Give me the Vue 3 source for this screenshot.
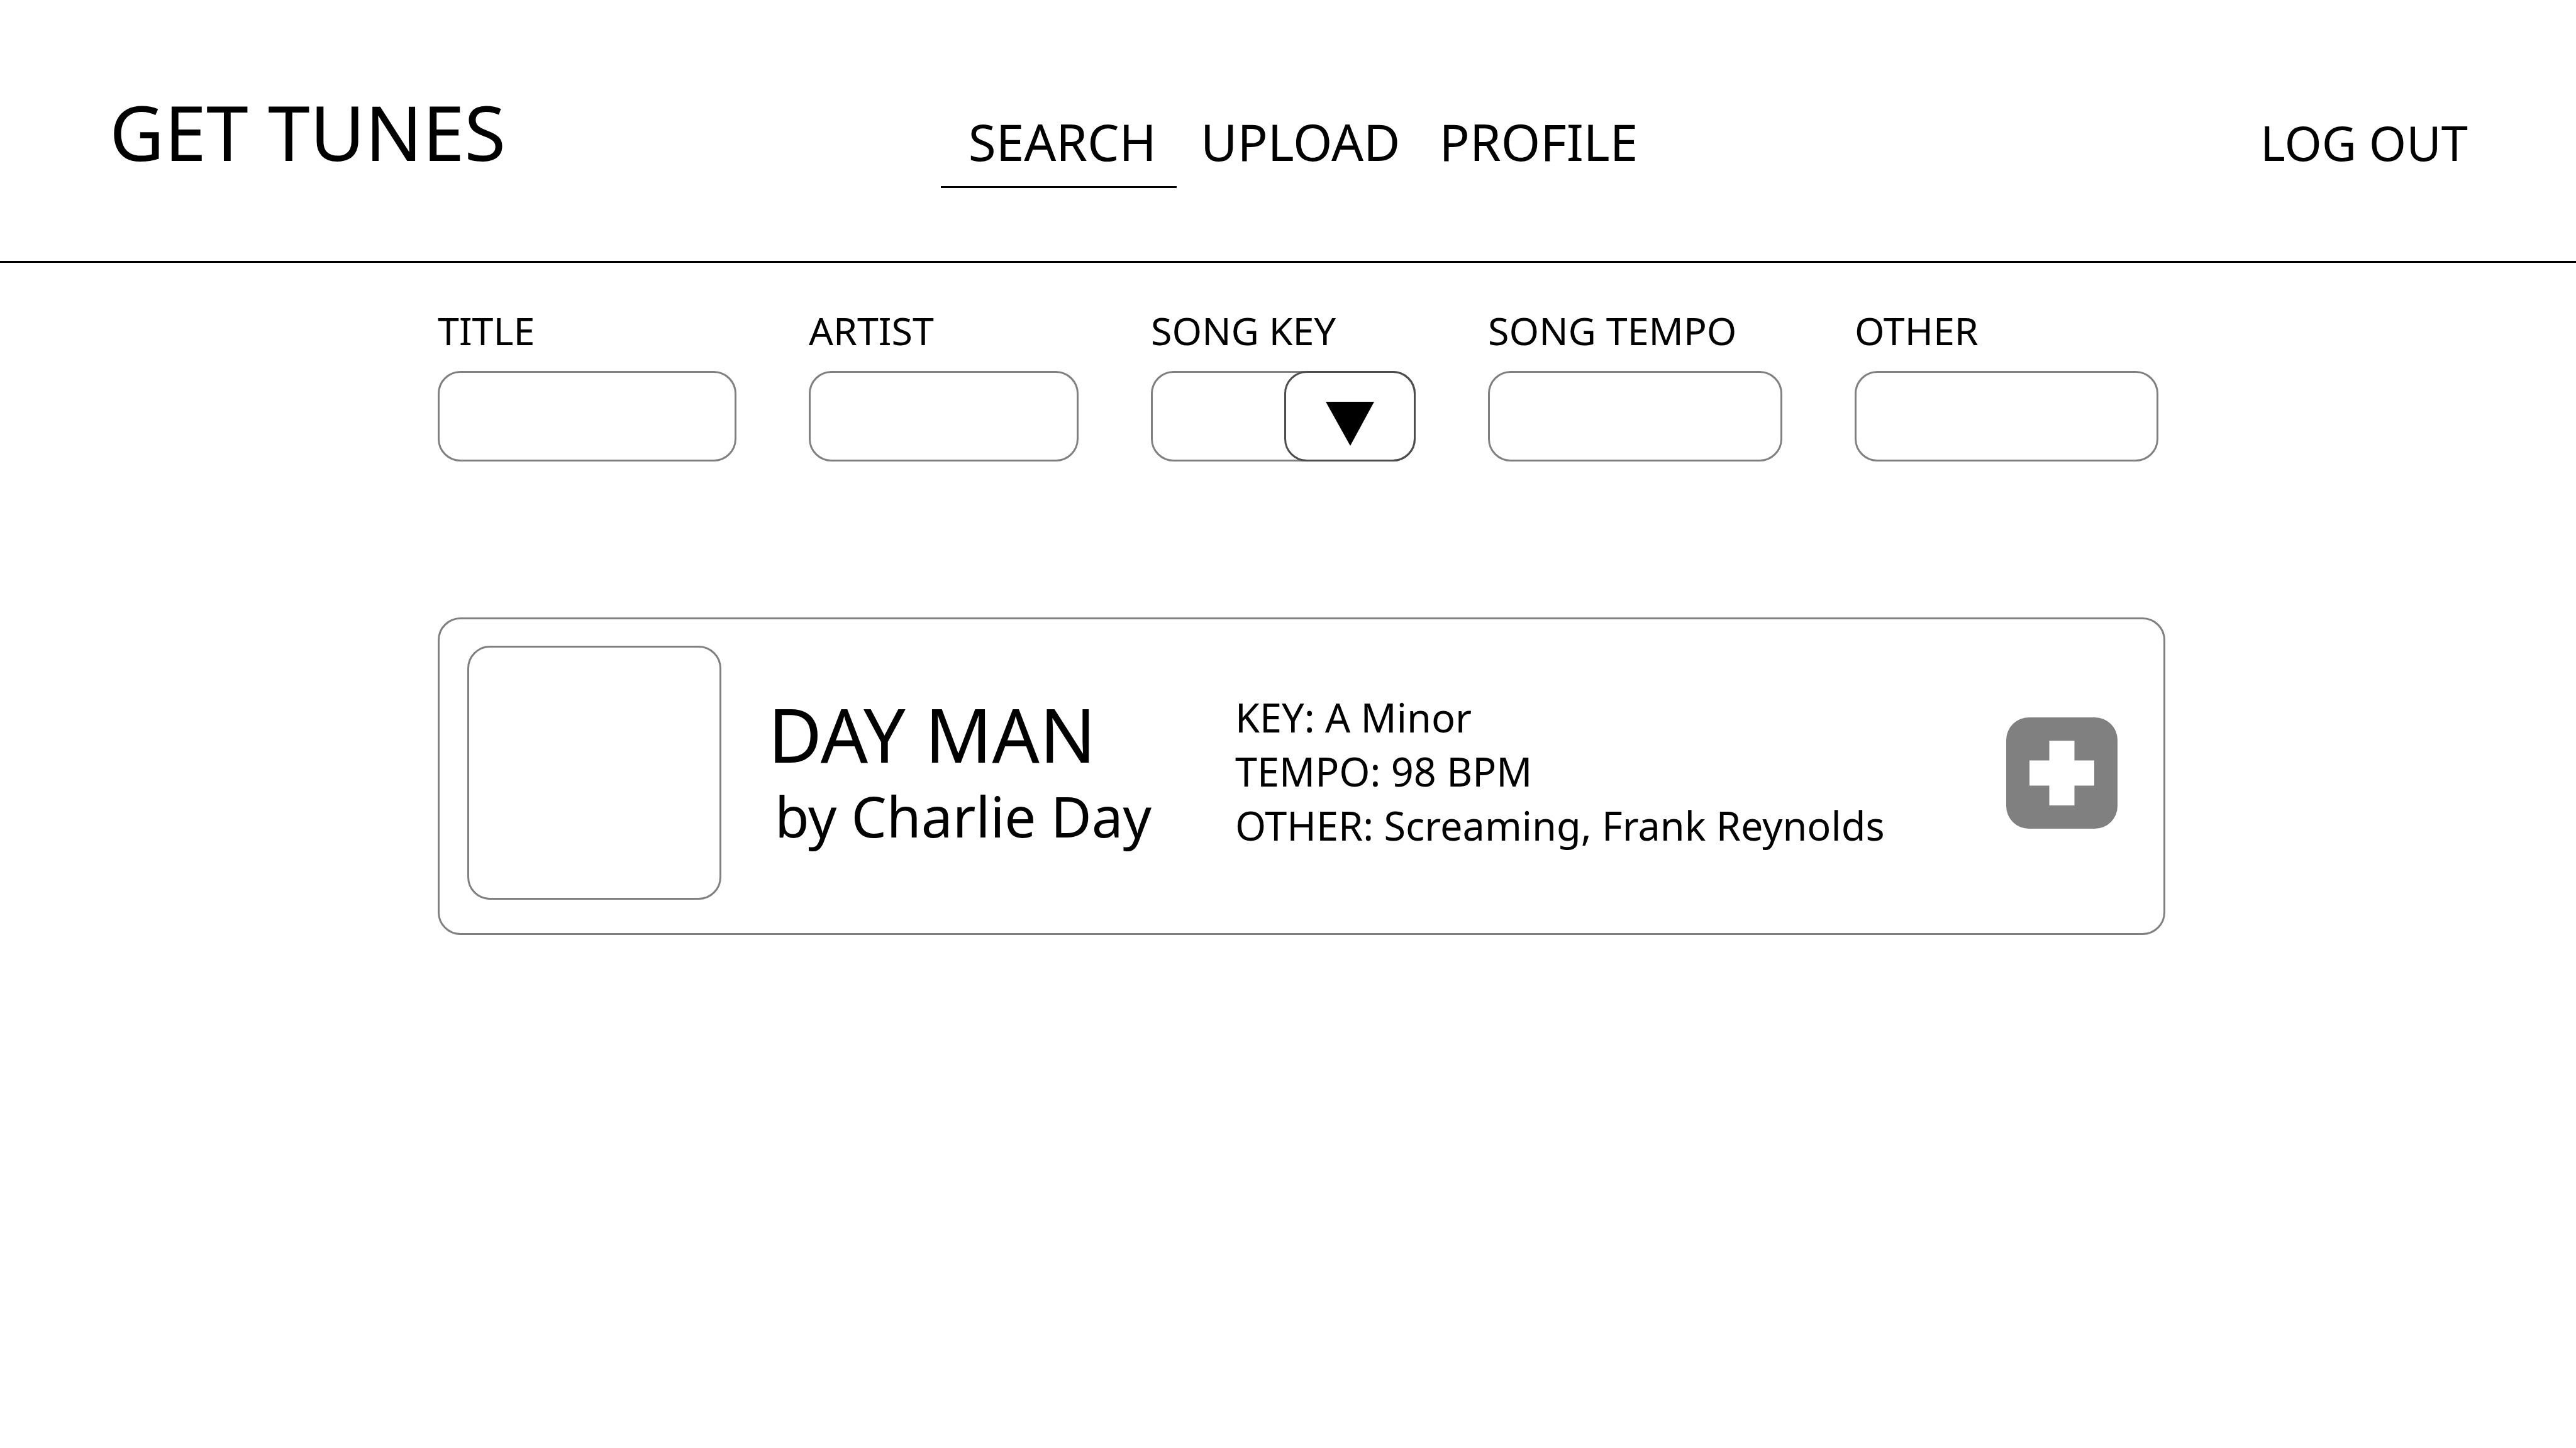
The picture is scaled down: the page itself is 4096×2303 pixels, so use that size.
<script setup>
import { ref } from 'vue'

const links = [
  { label: 'SEARCH', href: '#search', active: true },
  { label: 'UPLOAD', href: '#upload', active: false },
  { label: 'PROFILE', href: '#profile', active: false },
]

const filters = ref([
  { id: 'title', label: 'TITLE', type: 'text', value: '' },
  { id: 'artist', label: 'ARTIST', type: 'text', value: '' },
  { id: 'song-key', label: 'SONG KEY', type: 'select', value: '' },
  { id: 'song-tempo', label: 'SONG TEMPO', type: 'text', value: '' },
  { id: 'other', label: 'OTHER', type: 'text', value: '' },
])

const songs = [
  {
    title: 'DAY MAN',
    artist: 'by Charlie Day',
    details: ['KEY: A Minor', 'TEMPO: 98 BPM', 'OTHER: Screaming, Frank Reynolds'],
  },
]
</script>

<template>
  <div class="page">
    <header class="header">
      <h1 class="logo">GET TUNES</h1>
      <nav class="nav">
        <a
          v-for="link in links"
          :key="link.label"
          :href="link.href"
          class="nav-link"
          :class="{ active: link.active }"
        >{{ link.label }}</a>
      </nav>
      <a href="#logout" class="logout">LOG OUT</a>
    </header>

    <main class="main">
      <form class="filters" @submit.prevent>
        <div v-for="f in filters" :key="f.id" class="field">
          <label :for="f.id">{{ f.label }}</label>
          <div v-if="f.type === 'select'" class="select-wrap">
            <select :id="f.id" v-model="f.value" class="control">
              <option value=""></option>
            </select>
            <span class="arrow" aria-hidden="true">
              <svg width="77" height="70" viewBox="0 0 77 70">
                <path d="M0 0H77L39 70Z" fill="#000" />
              </svg>
            </span>
          </div>
          <input v-else :id="f.id" v-model="f.value" type="text" class="control" />
        </div>
      </form>

      <article v-for="song in songs" :key="song.title" class="card">
        <div class="cover"></div>
        <div class="song">
          <h2>{{ song.title }}</h2>
          <p>{{ song.artist }}</p>
        </div>
        <ul class="details">
          <li v-for="d in song.details" :key="d">{{ d }}</li>
        </ul>
        <button type="button" class="add" aria-label="Add song">
          <svg width="103" height="103" viewBox="0 0 103 103" aria-hidden="true">
            <path d="M31.500 0H71.500V31.500H103V71.500H71.500V103H31.500V71.500H0V31.500H31.500Z" fill="#fff" />
          </svg>
        </button>
      </article>
    </main>
  </div>
</template>

<style>
body {
  margin: 0;
  background: #fff;
}
</style>

<style scoped>
.page {
  color: #000;
  font-family: "Noto Sans", "Open Sans", sans-serif;
}

h1,
h2,
p,
ul {
  margin: 0;
  padding: 0;
  font-weight: 400;
}

a {
  color: inherit;
  text-decoration: none;
}

.header {
  display: grid;
  grid-template-columns: 1fr auto 1fr;
  align-items: baseline;
  padding: 150px 172px 116px;
  border-bottom: 3px solid #000;
}

.logo {
  padding-left: 2px;
  font-size: 120px;
  line-height: 120px;
}

.nav {
  display: flex;
  gap: 14px;
  margin-right: -28px;
  font-size: 80px;
  line-height: 80px;
}

.nav-link {
  padding: 0 24px 31px;
  border-bottom: 3px solid transparent;
}

.nav-link.active {
  padding: 0 32px 31px 44px;
  border-bottom-color: #000;
}

.logout {
  justify-self: end;
  font-size: 76px;
  line-height: 80px;
}

.main {
  padding: 77px 653px 77px 696px;
}

.filters {
  display: grid;
  grid-template-columns: 475fr 429fr 421fr 468fr 483fr;
  gap: 115px;
  padding-right: 11px;
  margin-bottom: 248px;
}

.field {
  display: flex;
  flex-direction: column;
  gap: 34px;
  min-width: 0;
}

.field label {
  font-size: 61px;
  line-height: 61px;
  white-space: nowrap;
}

.control {
  display: block;
  box-sizing: border-box;
  width: 100%;
  height: 144px;
  margin: 0;
  padding: 0 36px;
  border: 3px solid #808080;
  border-radius: 36px;
  background: #fff;
  color: inherit;
  font: inherit;
  font-size: 61px;
  appearance: none;
}

.select-wrap {
  position: relative;
}

.arrow {
  position: absolute;
  top: 0;
  right: 0;
  bottom: 0;
  display: flex;
  align-items: center;
  justify-content: center;
  box-sizing: border-box;
  width: 209px;
  padding-top: 24px;
  border: 3px solid #4d4d4d;
  border-radius: 36px;
  pointer-events: none;
}

.card {
  display: grid;
  grid-template-columns: 404px 667px 1fr 177px;
  align-items: center;
  column-gap: 74px;
  padding: 42px 73px 53px 44px;
  border: 3px solid #808080;
  border-radius: 36px;
}

.cover {
  box-sizing: border-box;
  height: 404px;
  border: 3px solid #808080;
  border-radius: 36px;
}

.song {
  padding-bottom: 8px;
}

.song h2 {
  font-size: 118px;
  line-height: 118px;
}

.song p {
  margin-top: 26px;
  padding-left: 11px;
  font-size: 89px;
  line-height: 89px;
}

.details {
  padding-bottom: 4px;
  padding-left: 2px;
  list-style: none;
  font-size: 63px;
  line-height: 86px;
  white-space: nowrap;
}

.add {
  display: flex;
  align-items: center;
  justify-content: center;
  width: 177px;
  height: 177px;
  padding: 0;
  border: 0;
  border-radius: 36px;
  background: #808080;
}
</style>
